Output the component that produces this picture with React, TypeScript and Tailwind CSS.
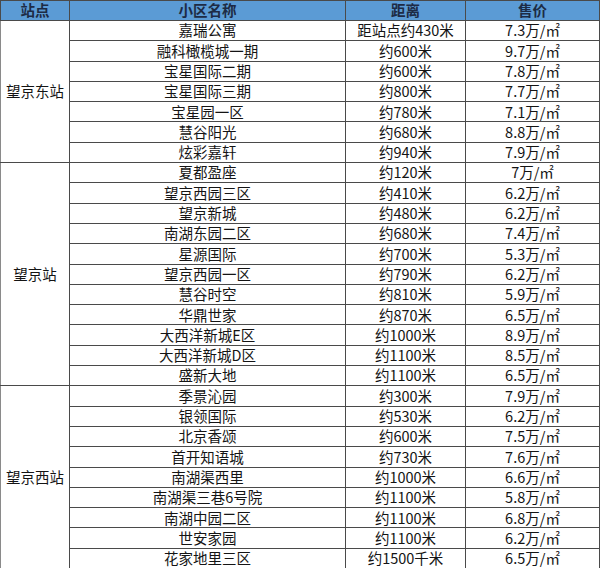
const FONT = '"Microsoft YaHei", "Noto Sans CJK SC", "Noto Sans", sans-serif';

type Row = { name: string; dist: string; price: string };

const GROUPS: { station: string; rows: Row[] }[] = [
  {
    station: "望京东站",
    rows: [
      { name: "嘉瑞公寓", dist: "距站点约430米", price: "7.3万/㎡" },
      { name: "融科橄榄城一期", dist: "约600米", price: "9.7万/㎡" },
      { name: "宝星国际二期", dist: "约600米", price: "7.8万/㎡" },
      { name: "宝星国际三期", dist: "约800米", price: "7.7万/㎡" },
      { name: "宝星园一区", dist: "约780米", price: "7.1万/㎡" },
      { name: "慧谷阳光", dist: "约680米", price: "8.8万/㎡" },
      { name: "炫彩嘉轩", dist: "约940米", price: "7.9万/㎡" },
    ],
  },
  {
    station: "望京站",
    rows: [
      { name: "夏都盈座", dist: "约120米", price: "7万/㎡" },
      { name: "望京西园三区", dist: "约410米", price: "6.2万/㎡" },
      { name: "望京新城", dist: "约480米", price: "6.2万/㎡" },
      { name: "南湖东园二区", dist: "约680米", price: "7.4万/㎡" },
      { name: "星源国际", dist: "约700米", price: "5.3万/㎡" },
      { name: "望京西园一区", dist: "约790米", price: "6.2万/㎡" },
      { name: "慧谷时空", dist: "约810米", price: "5.9万/㎡" },
      { name: "华鼎世家", dist: "约870米", price: "6.5万/㎡" },
      { name: "大西洋新城E区", dist: "约1000米", price: "8.9万/㎡" },
      { name: "大西洋新城D区", dist: "约1100米", price: "8.5万/㎡" },
      { name: "盛新大地", dist: "约1100米", price: "6.5万/㎡" },
    ],
  },
  {
    station: "望京西站",
    rows: [
      { name: "季景沁园", dist: "约300米", price: "7.9万/㎡" },
      { name: "银领国际", dist: "约530米", price: "6.2万/㎡" },
      { name: "北京香颂", dist: "约600米", price: "7.5万/㎡" },
      { name: "首开知语城", dist: "约730米", price: "7.6万/㎡" },
      { name: "南湖渠西里", dist: "约1000米", price: "6.6万/㎡" },
      { name: "南湖渠三巷6号院", dist: "约1100米", price: "5.8万/㎡" },
      { name: "南湖中园二区", dist: "约1100米", price: "6.8万/㎡" },
      { name: "世安家园", dist: "约1100米", price: "6.2万/㎡" },
      { name: "花家地里三区", dist: "约1500千米", price: "6.5万/㎡" },
    ],
  },
];

const cell = "border border-[#4a4a4a] p-0 text-center align-middle leading-none";

export default function App() {
  return (
    <div className="h-[568px] w-[600px] overflow-hidden bg-white" style={{ fontFamily: FONT }}>
      <table className="w-[599px] table-fixed border-collapse text-[14.5px] text-[#141414]">
        <colgroup>
          <col className="w-[69px]" />
          <col className="w-[276px]" />
          <col className="w-[120px]" />
          <col className="w-[134px]" />
        </colgroup>
        <thead>
          <tr className="h-[20px] bg-[#5b9bd5] text-[#1d2b45]">
            <th className={cell + " font-bold"}>站点</th>
            <th className={cell + " font-bold"}>小区名称</th>
            <th className={cell + " font-bold"}>距离</th>
            <th className={cell + " font-bold"}>售价</th>
          </tr>
        </thead>
        <tbody>
          {GROUPS.map((g) =>
            g.rows.map((r, i) => (
              <tr key={g.station + r.name} className="h-[20.3px]">
                {i === 0 && (
                  <td rowSpan={g.rows.length} className={cell + " border-l-[#8a8a8a]"}>
                    {g.station}
                  </td>
                )}
                <td className={cell}>{r.name}</td>
                <td className={cell}>{r.dist}</td>
                <td className={cell}>{r.price}</td>
              </tr>
            )),
          )}
        </tbody>
      </table>
    </div>
  );
}
